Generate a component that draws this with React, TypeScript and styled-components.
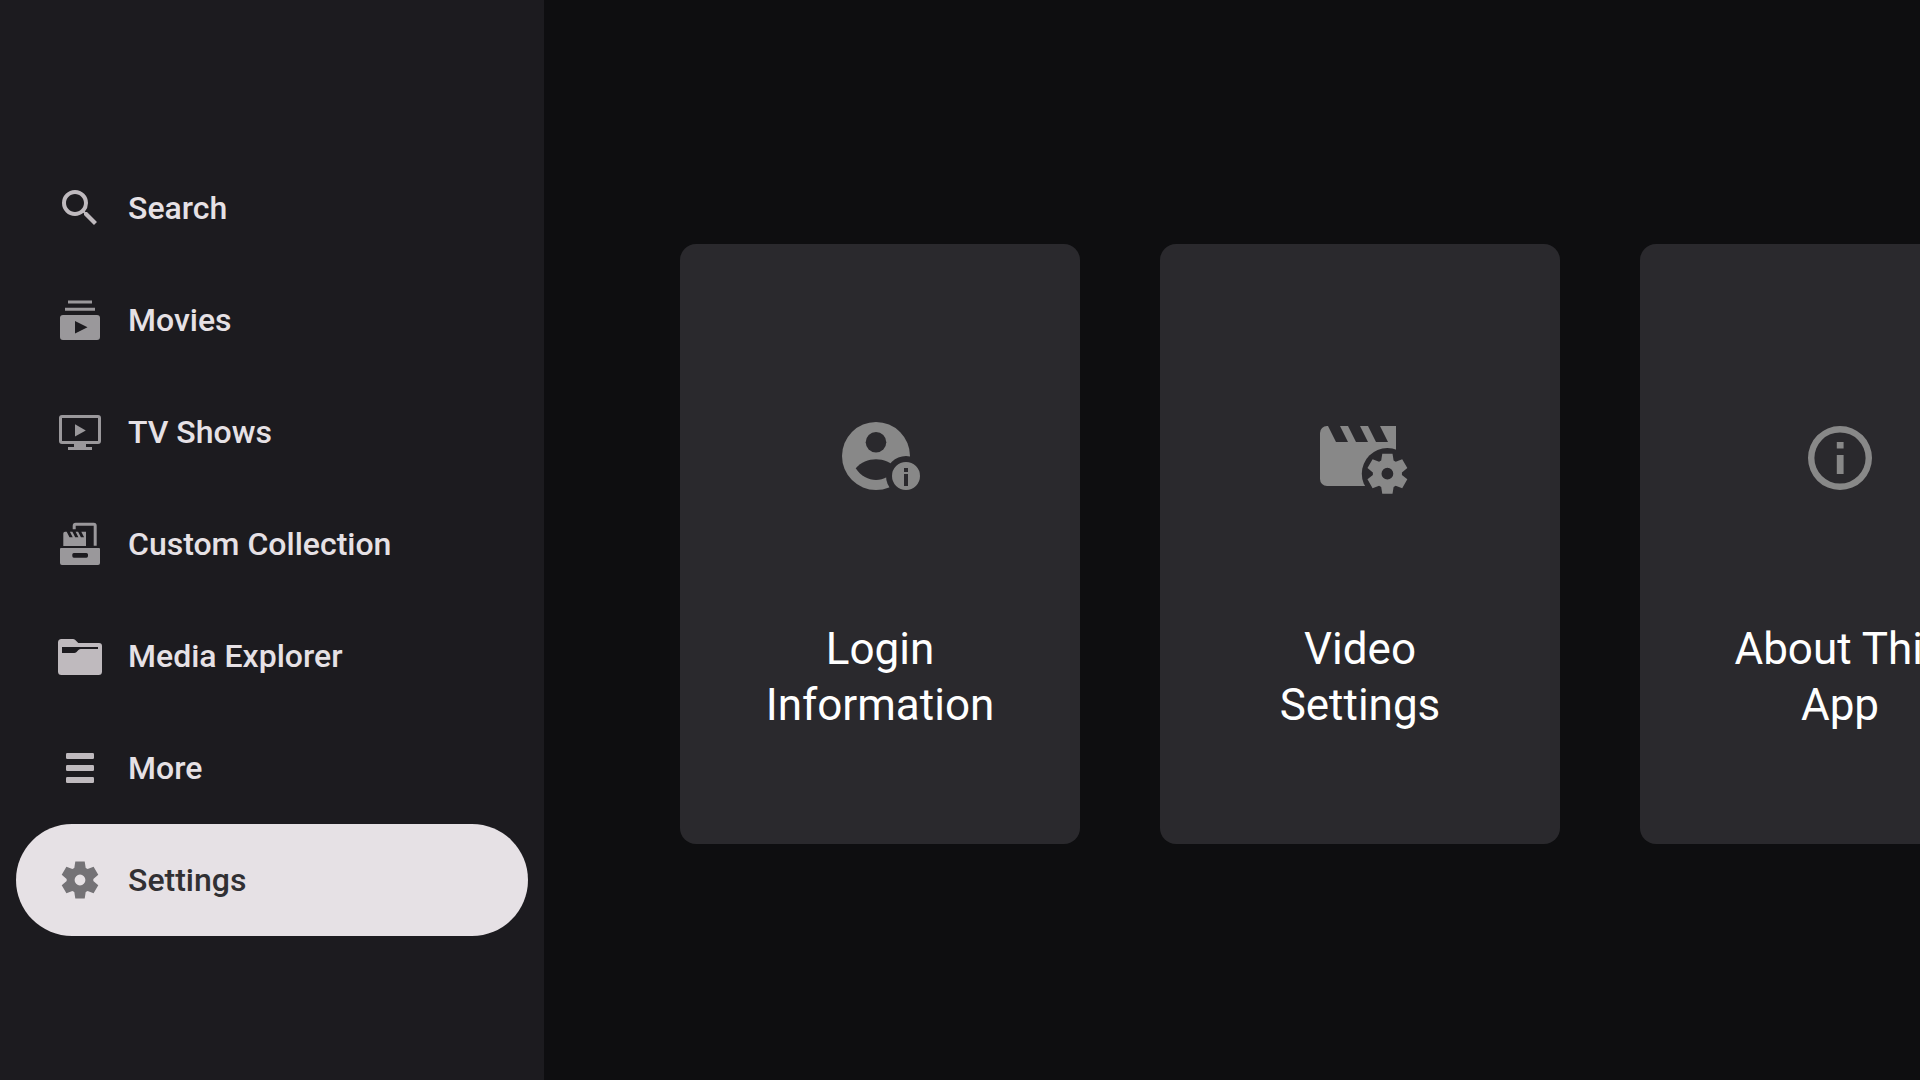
import React from "react";
import styled, { createGlobalStyle } from "styled-components";
import { MdSearch } from "react-icons/md";

const GlobalStyle = createGlobalStyle`
  *, *::before, *::after { box-sizing: border-box; }
  body {
    margin: 0;
    background: #0e0e10;
    font-family: Roboto, "Noto Sans", sans-serif;
  }
`;

const Screen = styled.div`
  display: flex;
  min-height: 100vh;
  overflow: hidden;
`;

const Sidebar = styled.nav`
  flex: 0 0 544px;
  display: flex;
  flex-direction: column;
  justify-content: center;
  padding: 8px 16px 0;
  background: #1c1b1f;
`;

const NavList = styled.ul`
  list-style: none;
  margin: 0;
  padding: 0;
`;

const NavButton = styled.button<{ $selected: boolean }>`
  display: flex;
  align-items: center;
  gap: 24px;
  width: 100%;
  height: 112px;
  padding: 0 40px;
  border: 0;
  border-radius: 56px;
  background: ${(p) => (p.$selected ? "#e6e1e5" : "transparent")};
  color: ${(p) => (p.$selected ? "#313033" : "#e6e1e5")};
  font: 500 32px/48px Roboto, "Noto Sans", sans-serif;
  text-align: left;
  cursor: pointer;
`;

const NavIcon = styled.span<{ $color: string }>`
  display: flex;
  flex: 0 0 48px;
  color: ${(p) => p.$color};

  svg {
    width: 48px;
    height: 48px;
    fill: currentColor;
  }
`;

const Content = styled.main`
  flex: 1;
  min-width: 0;
  display: flex;
  align-items: center;
  gap: 80px;
  padding: 8px 0 0 136px;
  overflow: hidden;
`;

const Card = styled.button`
  flex: 0 0 400px;
  height: 600px;
  display: flex;
  flex-direction: column;
  align-items: center;
  justify-content: flex-start;
  gap: 115px;
  padding: 166px 64px 0;
  border: 0;
  border-radius: 16px;
  background: #2a292d;
  color: #ffffff;
  font: 400 44px/56px Roboto, "Noto Sans", sans-serif;
  text-align: center;
  cursor: pointer;
`;

const CardIcon = styled.svg`
  flex: none;
  width: 96px;
  height: 96px;
  fill: #888888;
`;

/* Six-toothed cog centred on the origin: each tooth is a trapezoid, turned by 60 degrees. */
const TOOTH: [number, number][] = [
  [-5.7, -12.1],
  [-4.7, -18.4],
  [4.7, -18.4],
  [5.7, -12.1],
];

const GEAR =
  Array.from({ length: 6 }, (_, i) => (i * Math.PI) / 3)
    .flatMap((a) =>
      TOOTH.map(
        ([x, y]) =>
          `${(x * Math.cos(a) - y * Math.sin(a)).toFixed(2)} ${(x * Math.sin(a) + y * Math.cos(a)).toFixed(2)}`,
      ),
    )
    .map((point, i) => (i === 0 ? `M${point}` : `L${point}`))
    .join("") + "ZM0-5.4a5.4 5.4 0 1 0 0 10.8a5.4 5.4 0 1 0 0-10.8z";

const MoviesIcon = () => (
  <svg viewBox="0 0 48 48" aria-hidden="true">
    <path d="M12 4.5h24v3H12zM9 11.75h30v3H9z" />
    <path fillRule="evenodd" d="M7 19h34a3 3 0 0 1 3 3v19a3 3 0 0 1-3 3H7a3 3 0 0 1-3-3V22a3 3 0 0 1 3-3zM19 25v12.5l12.5-6.25z" />
  </svg>
);

const TvIcon = () => (
  <svg viewBox="0 0 48 48" aria-hidden="true">
    <path fillRule="evenodd" d="M6 7h36a3 3 0 0 1 3 3v23a3 3 0 0 1-3 3H30v3h6v3H12v-3h6v-3H6a3 3 0 0 1-3-3V10a3 3 0 0 1 3-3zM6 10v23h36V10z" />
    <path d="M19 16.3v12.2l10.8-6.1z" />
  </svg>
);

const CollectionIcon = () => (
  <svg viewBox="0 0 48 48" aria-hidden="true">
    <path d="M16.7 9.3V5.7a3 3 0 0 1 3-3h18a3 3 0 0 1 3 3v20h-3v-20h-18v3.6z" />
    <path d="M10.7 11.7l2.8 5.6h3.2l-2.8-5.6h2.5l2.8 5.6h3.2l-2.8-5.6h2.5l2.8 5.6h3.2l-2.8-5.6H30V26H7.3V13.4a1.7 1.7 0 0 1 1.7-1.7z" />
    <path fillRule="evenodd" d="M5 28h38a1 1 0 0 1 1 1v14a2 2 0 0 1-2 2H6a2 2 0 0 1-2-2V29a1 1 0 0 1 1-1zM18 33a1.6 1.6 0 0 0-1.7 1.6v1.5a1.6 1.6 0 0 0 1.7 1.6h12.4a1.6 1.6 0 0 0 1.6-1.6v-1.5a1.6 1.6 0 0 0-1.6-1.6z" />
  </svg>
);

const FolderIcon = () => (
  <svg viewBox="0 0 48 48" aria-hidden="true">
    <path fillRule="evenodd" d="M5.5 7H17a3 3 0 0 1 2 .8L22.3 11H43a3 3 0 0 1 3 3v25.5a3.5 3.5 0 0 1-3.5 3.5h-37A3.5 3.5 0 0 1 2 39.5v-29A3.5 3.5 0 0 1 5.5 7zM6 15v6h12.3a3 3 0 0 0 2-.8l2.4-2.4a3 3 0 0 1 2-.8H42v-2z" />
  </svg>
);

const MoreIcon = () => (
  <svg viewBox="0 0 48 48" aria-hidden="true">
    <rect x="10" y="9" width="28" height="6" rx="1.2" />
    <rect x="10" y="21" width="28" height="6" rx="1.2" />
    <rect x="10" y="33" width="28" height="6" rx="1.2" />
  </svg>
);

const SettingsIcon = () => (
  <svg viewBox="-24 -24 48 48" aria-hidden="true">
    <path fillRule="evenodd" d={GEAR} />
  </svg>
);

const LoginInfoIcon = () => (
  <CardIcon viewBox="0 0 96 96" aria-hidden="true">
    <mask id="login-badge">
      <rect width="96" height="96" fill="#fff" />
      <circle cx="44" cy="32.3" r="10.3" fill="#000" />
      <path d="M23.7 58.3C34 46.2 54 46.2 64.3 58.3C54 74 34 74 23.7 58.3z" fill="#000" />
      <circle cx="74" cy="66" r="20" fill="#000" />
    </mask>
    <circle cx="44" cy="46" r="34" mask="url(#login-badge)" />
    <path fillRule="evenodd" d="M74 52a14 14 0 1 1 0 28a14 14 0 1 1 0-28zM72 58v4h4v-4zM72 64v12h4V64z" />
  </CardIcon>
);

const VideoSettingsIcon = () => (
  <CardIcon viewBox="0 0 96 96" aria-hidden="true">
    <mask id="video-gear">
      <rect width="96" height="96" fill="#fff" />
      <circle cx="75.4" cy="63.7" r="25.6" fill="#000" />
    </mask>
    <path mask="url(#video-gear)" d="M16 16l8 16h12l-8-16h8l8 16h12l-8-16h8l8 16h12l-8-16h16v60H15a7 7 0 0 1-7-7V23a7 7 0 0 1 7-7z" />
    <path fillRule="evenodd" transform="translate(75.4 63.7) scale(1.09)" d={GEAR} />
  </CardIcon>
);

const AboutIcon = () => (
  <CardIcon viewBox="0 0 96 96" aria-hidden="true">
    <path fillRule="evenodd" d="M48 16a32 32 0 1 1 0 64a32 32 0 1 1 0-64zM48 22.4a25.6 25.6 0 1 0 0 51.2a25.6 25.6 0 1 0 0-51.2z" />
    <path d="M44.8 32h6.8v6.6h-6.8zM44.8 45h6.8v19h-6.8z" />
  </CardIcon>
);

const navItems = [
  { label: "Search", color: "#bfbabe", icon: <MdSearch aria-hidden="true" /> },
  { label: "Movies", color: "#9a989b", icon: <MoviesIcon /> },
  { label: "TV Shows", color: "#9a989b", icon: <TvIcon /> },
  { label: "Custom Collection", color: "#9a989b", icon: <CollectionIcon /> },
  { label: "Media Explorer", color: "#bfbabe", icon: <FolderIcon /> },
  { label: "More", color: "#bfbabe", icon: <MoreIcon /> },
  { label: "Settings", color: "#747276", icon: <SettingsIcon />, selected: true },
];

const cards = [
  { label: "Login Information", icon: <LoginInfoIcon /> },
  { label: "Video Settings", icon: <VideoSettingsIcon /> },
  { label: "About This App", icon: <AboutIcon /> },
];

export default function App() {
  return (
    <Screen>
      <GlobalStyle />
      <Sidebar aria-label="Main">
        <NavList>
          {navItems.map((item) => (
            <li key={item.label}>
              <NavButton
                type="button"
                $selected={!!item.selected}
                aria-current={item.selected ? "page" : undefined}
              >
                <NavIcon $color={item.color}>{item.icon}</NavIcon>
                {item.label}
              </NavButton>
            </li>
          ))}
        </NavList>
      </Sidebar>
      <Content>
        {cards.map((card) => (
          <Card key={card.label} type="button">
            {card.icon}
            <span>{card.label}</span>
          </Card>
        ))}
      </Content>
    </Screen>
  );
}
